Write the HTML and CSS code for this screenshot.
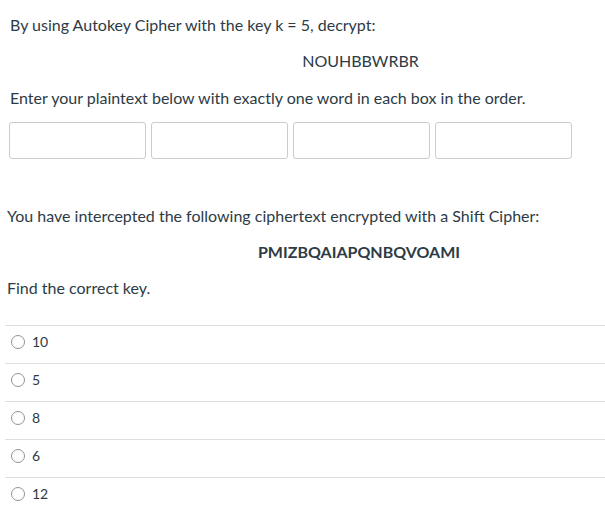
FILE: index.html
```html
<!DOCTYPE html>
<html>
<head>
<meta charset="utf-8">
<link rel="stylesheet" href="styles.css">
</head>
<body>
<div class="page">
  <section class="q q1">
    <p class="prompt">By using Autokey Cipher with the key k = 5, decrypt:</p>
    <p class="cipher">NOUHBBWRBR</p>
    <p class="prompt instr">Enter your plaintext below with exactly one word in each box in the order.</p>
    <div class="boxes">
      <input class="box" type="text">
      <input class="box" type="text">
      <input class="box" type="text">
      <input class="box" type="text">
    </div>
  </section>
  <section class="q q2">
    <p class="prompt">You have intercepted the following ciphertext encrypted with a Shift Cipher:</p>
    <p class="cipher bold">PMIZBQAIAPQNBQVOAMI</p>
    <p class="prompt find">Find the correct key.</p>
    <div class="answers">
      <label class="answer"><span class="radio"></span><span class="num">10</span></label>
      <label class="answer"><span class="radio"></span><span class="num">5</span></label>
      <label class="answer"><span class="radio"></span><span class="num">8</span></label>
      <label class="answer"><span class="radio"></span><span class="num">6</span></label>
      <label class="answer"><span class="radio"></span><span class="num">12</span></label>
    </div>
  </section>
</div>
</body>
</html>
```
FILE: styles.css
```css
html, body {
  margin: 0;
  padding: 0;
  background: #fff;
  overflow: hidden;
}
body {
  font-family: Lato, "Liberation Sans", sans-serif;
  color: #2d3b45;
  font-size: 16px;
}
.page {
  width: 605px;
}
p { margin: 0; }
.q1 {
  padding: 15px 0 0 10px;
}
.q1 .prompt {
  line-height: 20px;
}
.cipher {
  padding-left: 106px;
  text-align: center;
  line-height: 20px;
  margin-top: 16px;
}
.instr {
  margin-top: 17px;
}
.boxes {
  display: flex;
  gap: 5px;
  margin-top: 14px;
  margin-left: -1px;
}
.box {
  box-sizing: border-box;
  width: 137px;
  height: 37px;
  margin: 0;
  border: 1px solid #c7cdd1;
  border-radius: 3px;
  background: #fff;
  padding: 0;
}
.q2 {
  padding: 47px 0 0 7px;
}
.q2 .prompt { line-height: 20px; }
.q2 .cipher {
  margin-top: 16px;
}
.bold { font-weight: 700; }
.find { margin-top: 16px; }
.answers {
  margin-top: 27px;
  margin-left: -2px;
}
.answer {
  box-sizing: border-box;
  display: flex;
  align-items: center;
  height: 38px;
  border-top: 1px solid #dcdfe1;
  padding-left: 6px;
  padding-bottom: 6px;
  font-size: 14px;
}
.radio {
  box-sizing: border-box;
  width: 14px;
  height: 14px;
  border: 1px solid #8b959c;
  border-radius: 50%;
  margin-right: 7px;
}
.num { line-height: 16px; }
```
